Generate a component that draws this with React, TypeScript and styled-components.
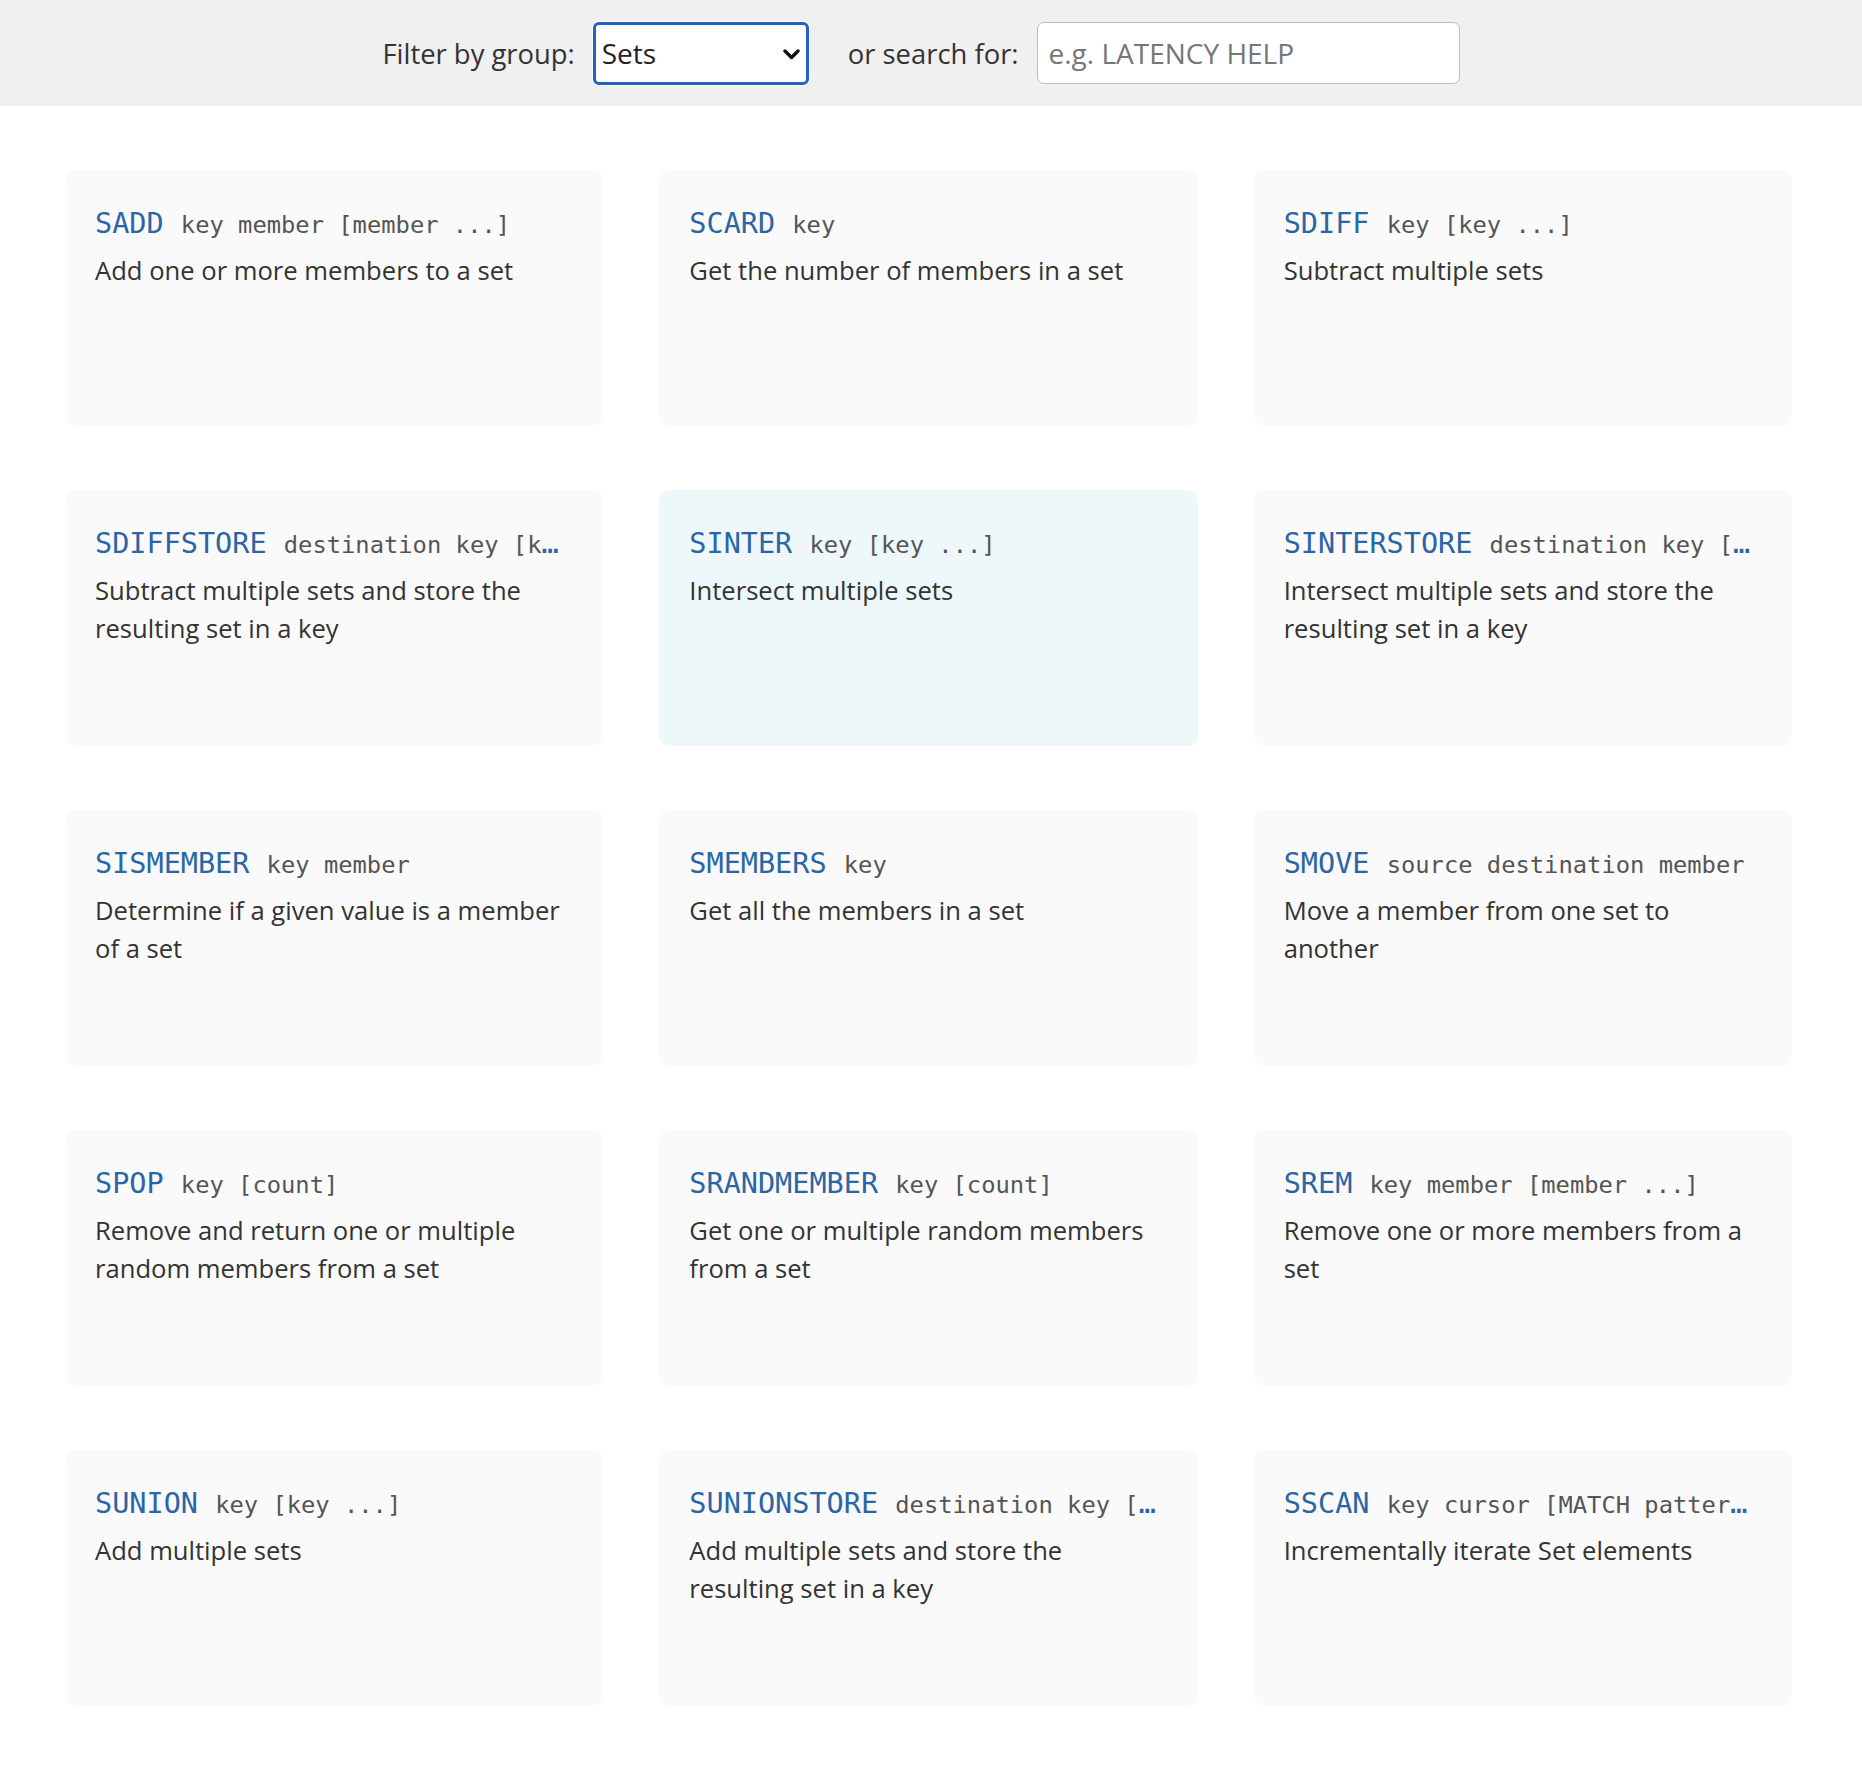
import React, { useState } from 'react';
import styled, { createGlobalStyle } from 'styled-components';

interface ICommand {
  name: string;
  args: string;
  summary: string;
}

const commands: ICommand[] = [
  { name: 'SADD', args: 'key member [member ...]', summary: 'Add one or more members to a set' },
  { name: 'SCARD', args: 'key', summary: 'Get the number of members in a set' },
  { name: 'SDIFF', args: 'key [key ...]', summary: 'Subtract multiple sets' },
  {
    name: 'SDIFFSTORE',
    args: 'destination key [key ...]',
    summary: 'Subtract multiple sets and store the resulting set in a key',
  },
  { name: 'SINTER', args: 'key [key ...]', summary: 'Intersect multiple sets' },
  {
    name: 'SINTERSTORE',
    args: 'destination key [key ...]',
    summary: 'Intersect multiple sets and store the resulting set in a key',
  },
  { name: 'SISMEMBER', args: 'key member', summary: 'Determine if a given value is a member of a set' },
  { name: 'SMEMBERS', args: 'key', summary: 'Get all the members in a set' },
  { name: 'SMOVE', args: 'source destination member', summary: 'Move a member from one set to another' },
  { name: 'SPOP', args: 'key [count]', summary: 'Remove and return one or multiple random members from a set' },
  { name: 'SRANDMEMBER', args: 'key [count]', summary: 'Get one or multiple random members from a set' },
  { name: 'SREM', args: 'key member [member ...]', summary: 'Remove one or more members from a set' },
  { name: 'SUNION', args: 'key [key ...]', summary: 'Add multiple sets' },
  {
    name: 'SUNIONSTORE',
    args: 'destination key [key ...]',
    summary: 'Add multiple sets and store the resulting set in a key',
  },
  {
    name: 'SSCAN',
    args: 'key cursor [MATCH pattern] [COUNT count]',
    summary: 'Incrementally iterate Set elements',
  },
];

const groups = [
  'All',
  'Cluster',
  'Connection',
  'Geo',
  'Hashes',
  'HyperLogLog',
  'Keys',
  'Lists',
  'Pub/Sub',
  'Scripting',
  'Server',
  'Sets',
  'Sorted Sets',
  'Streams',
  'Strings',
  'Transactions',
];

const GlobalStyle = createGlobalStyle`
  html, body {
    margin: 0;
    padding: 0;
    background: #fff;
  }

  body {
    font-family: "Open Sans", "Noto Sans", sans-serif;
    font-size: 25.6px;
    color: #333;
  }
`;

const FilterBar = styled.form`
  height: 106px;
  display: flex;
  align-items: center;
  justify-content: center;
  padding-right: 20px;
  background: #f0f0f0;
`;

const FilterLabel = styled.label<{ $gap?: number }>`
  margin-left: ${p => p.$gap || 0}px;
  margin-right: 18px;
  font-size: 27.4px;
  color: #333;
`;

const SelectWrap = styled.div`
  position: relative;
  flex: none;
  width: 216px;
  height: 63px;
  border-radius: 6px;
  box-shadow: 0 0 0 1px #fff;
`;

const GroupSelect = styled.select`
  appearance: none;
  -webkit-appearance: none;
  width: 100%;
  height: 100%;
  box-sizing: border-box;
  margin: 0;
  padding: 0 40px 0 6px;
  border: 3px solid #2462c6;
  border-radius: 6px;
  background: #fff;
  font-family: "Open Sans", sans-serif;
  font-size: 28px;
  color: #222;
  outline: none;
`;

// chevron sits over the native select, which has its own arrow hidden
const Chevron = styled.svg`
  position: absolute;
  right: 9px;
  top: 27px;
  width: 17px;
  height: 11px;
  pointer-events: none;
`;

const SearchInput = styled.input`
  flex: none;
  width: 423px;
  height: 62px;
  box-sizing: border-box;
  padding: 0 11px;
  border: 1.5px solid #bdbdbd;
  border-radius: 7px;
  background: #fff;
  font-family: "Open Sans", sans-serif;
  font-size: 28px;
  color: #333;
  outline: none;

  &::placeholder {
    color: #767676;
  }
`;

const CommandGrid = styled.ul`
  list-style: none;
  margin: 0;
  padding: 64px 70px 62px 65px;
  display: grid;
  grid-template-columns: repeat(3, minmax(0, 1fr));
  gap: 64px 56px;
`;

const Card = styled.li<{ $active?: boolean }>`
  min-width: 0;
  height: 256px;
  box-sizing: border-box;
  padding: 33px 36px 0 30px;
  border-radius: 10px;
  background: ${p => (p.$active ? '#eef7fa' : '#fafafa')};
  cursor: pointer;
`;

const CommandName = styled.div`
  margin-bottom: 6px;
  font-family: "DejaVu Sans Mono", "Liberation Mono", monospace;
  font-size: 28.5px;
  line-height: 42px;
  color: #2a66a7;
  white-space: nowrap;
  overflow: hidden;
  text-overflow: ellipsis;
`;

const Args = styled.span`
  font-size: 0.835em;
  color: #555;
`;

const Summary = styled.p`
  margin: 0;
  font-size: 25.6px;
  line-height: 38.4px;
  color: #333;
`;

export default function App() {
  const [group, setGroup] = useState('Sets');
  const [search, setSearch] = useState('');

  return (
    <>
      <GlobalStyle />
      <FilterBar onSubmit={e => e.preventDefault()}>
        <FilterLabel htmlFor='group'>Filter by group:</FilterLabel>
        <SelectWrap>
          <GroupSelect id='group' value={group} onChange={e => setGroup(e.currentTarget.value)}>
            {groups.map(g => (
              <option key={g} value={g}>
                {g}
              </option>
            ))}
          </GroupSelect>
          <Chevron viewBox='0 0 17 11'>
            <path
              d='M2 2 L8.5 8.5 L15 2'
              fill='none'
              stroke='#111'
              strokeWidth='3.4'
              strokeLinecap='round'
              strokeLinejoin='round'
            />
          </Chevron>
        </SelectWrap>
        <FilterLabel htmlFor='search' $gap={39}>
          or search for:
        </FilterLabel>
        <SearchInput
          id='search'
          type='text'
          placeholder='e.g. LATENCY HELP'
          value={search}
          onChange={e => setSearch(e.currentTarget.value)}
        />
      </FilterBar>

      <CommandGrid>
        {commands.map(c => (
          <Card key={c.name} $active={c.name === 'SINTER'}>
            <CommandName>
              {c.name} <Args>{c.args}</Args>
            </CommandName>
            <Summary>{c.summary}</Summary>
          </Card>
        ))}
      </CommandGrid>
    </>
  );
}
